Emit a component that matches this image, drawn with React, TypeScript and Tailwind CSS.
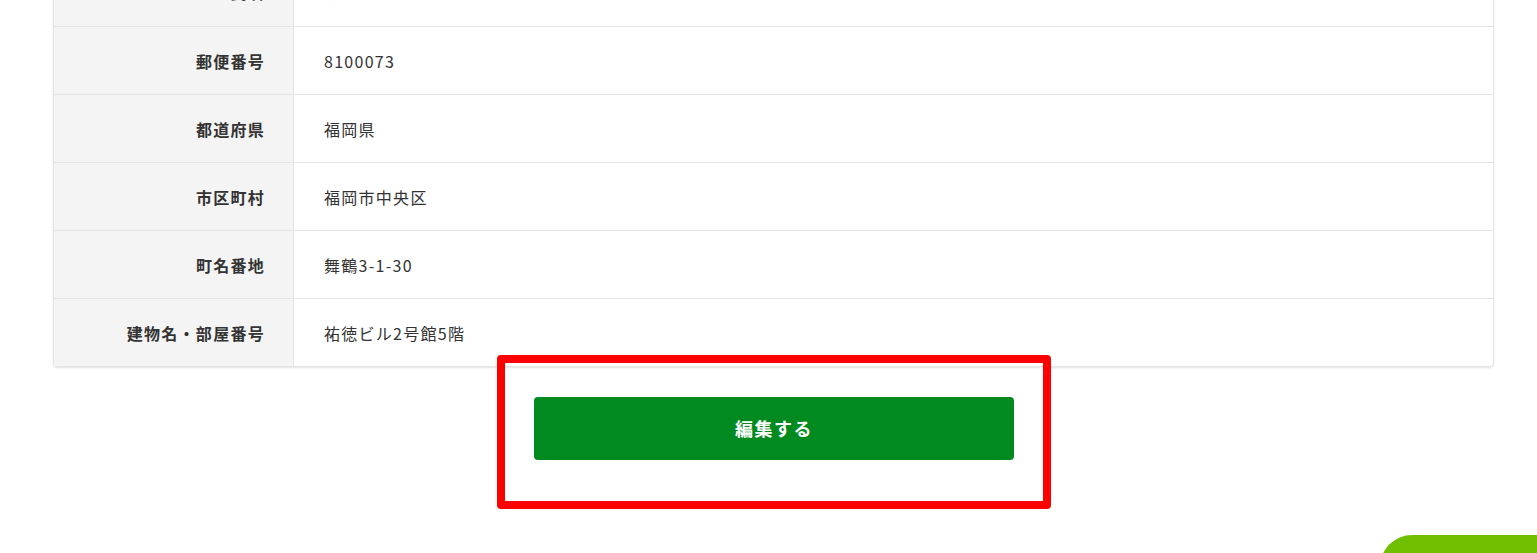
const rows = [
  { label: "氏名", value: "テスト" },
  { label: "郵便番号", value: "8100073" },
  { label: "都道府県", value: "福岡県" },
  { label: "市区町村", value: "福岡市中央区" },
  { label: "町名番地", value: "舞鶴3-1-30" },
  { label: "建物名・部屋番号", value: "祐徳ビル2号館5階" },
];

export default function App() {
  return (
    <div
      className="relative h-[553px] overflow-hidden bg-white text-[#333]"
      style={{ fontFamily: '"Noto Sans CJK JP", "Noto Sans", sans-serif' }}
    >
      <div className="-mt-[43px] pl-[53px] pr-[43px]">
        <div className="rounded-b-[4px] border border-[#e5e5e5] shadow-[0_1px_2px_rgba(0,0,0,0.12)]">
          {rows.map((row, i) => (
            <div
              key={row.label}
              className={`flex h-[68px] ${i > 0 ? "border-t border-[#e5e5e5]" : ""}`}
            >
              <div className="flex w-[240px] shrink-0 items-center justify-end border-r border-[#e5e5e5] bg-[#f4f4f4] pr-[28px] text-[16px] font-bold tracking-[0.08em]">
                {row.label}
              </div>
              <div className="flex items-center pl-[30px] text-[16px] tracking-[0.08em]">
                {row.value}
              </div>
            </div>
          ))}
        </div>
      </div>

      <div className="mt-[30px] flex justify-center pl-[11px]">
        <button className="flex h-[63px] w-[480px] items-center justify-center rounded-[4px] bg-[#008a20] text-[18px] font-bold tracking-[0.08em] text-white">
          編集する
        </button>
      </div>

      {/* annotation frame */}
      <div className="absolute left-[497px] top-[355px] h-[154px] w-[554px] rounded-[4px] border-[8px] border-[#ff0000]" />

      {/* floating button peeking in */}
      <div className="absolute left-[1380px] top-[535px] h-[80px] w-[200px] rounded-[32px] bg-[#6fbe00]" />
    </div>
  );
}
